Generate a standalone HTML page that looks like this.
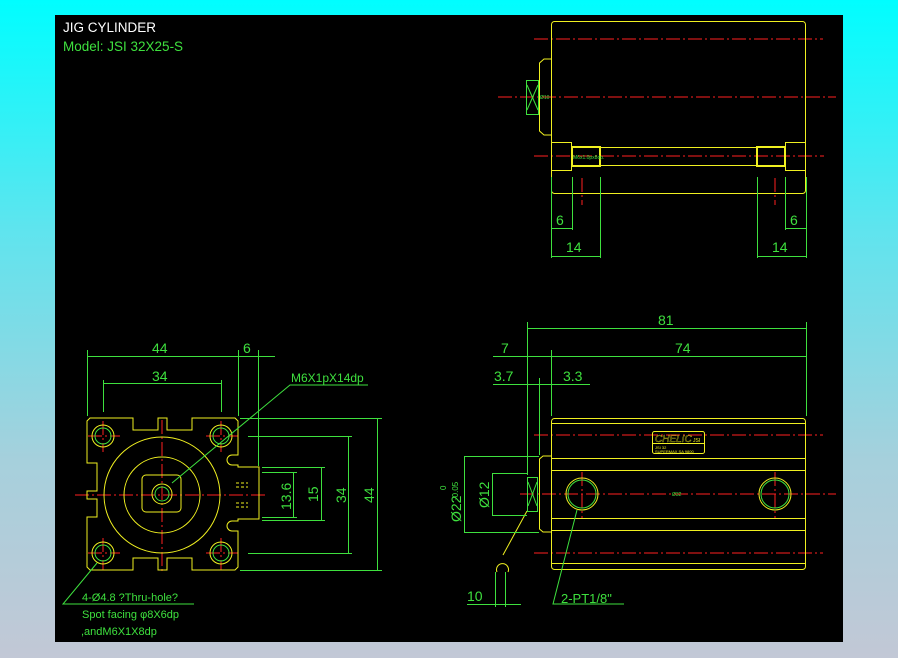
<!DOCTYPE html>
<html><head><meta charset="utf-8"><style>
html,body{margin:0;padding:0;}
body{width:898px;height:658px;overflow:hidden;background:linear-gradient(#00feff 0%,#5fe4ee 35%,#a6d0dc 70%,#c2c8d6 100%);position:relative;}
#p{position:absolute;left:55px;top:15px;width:788px;height:627px;background:#000;}
svg{position:absolute;left:0;top:0;}
text{font-family:"Liberation Sans",sans-serif;}
</style></head><body>
<div id="p"></div>
<svg width="898" height="658" viewBox="0 0 898 658">
<g fill="none" stroke-width="1">
<!-- title -->
<text x="63" y="32" fill="#fff" font-size="13.5" stroke="none">JIG CYLINDER</text>
<text x="63" y="51" fill="#3ee03e" font-size="13.5" stroke="none">Model: JSI 32X25-S</text>

<!-- TOP VIEW -->
<g stroke="#ff2020" stroke-dasharray="14,3,2,3">
<line x1="534" y1="39" x2="823" y2="39"/>
<line x1="498" y1="97" x2="836" y2="97"/>
<line x1="534" y1="156" x2="824" y2="156"/>
<line x1="582" y1="178" x2="582" y2="205"/>
<line x1="775" y1="178" x2="775" y2="205"/>
</g>
<g stroke="#f0f020">
<rect x="551.5" y="21.5" width="254" height="172" rx="3"/>
<path d="M551 59 H544 L539.5 63 V131 L544 135 H551"/>
<rect x="551.5" y="142.5" width="20" height="28"/>
<rect x="785.5" y="142.5" width="20" height="28"/>
<rect x="572" y="147" width="28" height="19" stroke-width="2"/>
<line x1="600" y1="147.5" x2="757" y2="147.5"/>
<line x1="600" y1="165.5" x2="757" y2="165.5"/>
<rect x="757" y="147" width="28" height="19" stroke-width="2"/>
</g>
<g stroke="#3ee03e">
<rect x="526.5" y="80.5" width="12" height="34"/>
<path d="M527 85 L538 110 M538 85 L527 110"/>
<line x1="551.5" y1="177" x2="551.5" y2="258"/>
<line x1="572.5" y1="177" x2="572.5" y2="230"/>
<line x1="600.5" y1="177" x2="600.5" y2="258"/>
<line x1="757.5" y1="177" x2="757.5" y2="258"/>
<line x1="785.5" y1="177" x2="785.5" y2="230"/>
<line x1="806.5" y1="177" x2="806.5" y2="258"/>
<line x1="551" y1="228.5" x2="572" y2="228.5"/>
<line x1="785" y1="228.5" x2="806" y2="228.5"/>
<line x1="551" y1="256.5" x2="600" y2="256.5"/>
<line x1="757" y1="256.5" x2="806" y2="256.5"/>
</g>
<g fill="#3ee03e" stroke="none" font-size="14">
<text x="556" y="225">6</text><text x="790" y="225">6</text>
<text x="566" y="252">14</text><text x="772" y="252">14</text>
<text x="573" y="159" font-size="5">M6x1.0px8dp.</text>
<text x="540" y="99" font-size="5">Ø10</text>
</g>

<!-- FRONT VIEW -->
<g stroke="#ff2020" stroke-dasharray="14,3,2,3">
<line x1="75" y1="495" x2="265" y2="495"/>
<line x1="162" y1="420" x2="162" y2="572"/>
<line x1="88" y1="436" x2="120" y2="436"/><line x1="103" y1="421" x2="103" y2="452"/>
<line x1="206" y1="436" x2="238" y2="436"/><line x1="221" y1="421" x2="221" y2="452"/>
<line x1="88" y1="553" x2="120" y2="553"/><line x1="103" y1="538" x2="103" y2="570"/>
<line x1="206" y1="553" x2="238" y2="553"/><line x1="221" y1="538" x2="221" y2="570"/>
</g>
<g stroke="#f0f020">
<path d="M90 418 H133 V430 H158 V418 H167 V430 H192 V418 H235 L238 421 V455 H232 A5 5 0 0 0 232 465 H238 V467 H259 V519 H238 V521 H232 A5 5 0 0 0 232 531 H238 V567 L235 570 H192 V558 H167 V570 H158 V558 H133 V570 H90 L87 567 V517 H97 V499 H87 V491 H97 V463 H87 V421 Z"/>
<circle cx="162" cy="495" r="58"/>
<circle cx="162" cy="495" r="38"/>
<rect x="142" y="475" width="39" height="37" rx="4"/>
<circle cx="162" cy="494" r="10"/>
<circle cx="103" cy="436" r="11"/><circle cx="221" cy="436" r="11"/>
<circle cx="103" cy="553" r="11"/><circle cx="221" cy="553" r="11"/>
<path d="M236 483 h12 M236 487 h12 M236 503 h12 M236 507 h12" stroke-dasharray="3,2"/>
</g>
<g stroke="#3ee03e">
<circle cx="162" cy="494" r="7"/>
<circle cx="103" cy="436" r="8"/><circle cx="221" cy="436" r="8"/>
<circle cx="103" cy="553" r="8"/><circle cx="221" cy="553" r="8"/>
<line x1="87.5" y1="350" x2="87.5" y2="416"/>
<line x1="238.5" y1="350" x2="238.5" y2="416"/>
<line x1="258.5" y1="350" x2="258.5" y2="466"/>
<line x1="103.5" y1="380" x2="103.5" y2="412"/>
<line x1="221.5" y1="380" x2="221.5" y2="412"/>
<line x1="87" y1="356.5" x2="275" y2="356.5"/>
<line x1="103" y1="383.5" x2="221" y2="383.5"/>
<line x1="240" y1="418.5" x2="382" y2="418.5"/>
<line x1="248" y1="436.5" x2="352" y2="436.5"/>
<line x1="262" y1="467.5" x2="325" y2="467.5"/>
<line x1="262" y1="472.5" x2="297" y2="472.5"/>
<line x1="262" y1="517.5" x2="297" y2="517.5"/>
<line x1="262" y1="520.5" x2="325" y2="520.5"/>
<line x1="248" y1="553.5" x2="352" y2="553.5"/>
<line x1="240" y1="570.5" x2="382" y2="570.5"/>
<line x1="293.5" y1="472" x2="293.5" y2="517"/>
<line x1="321.5" y1="467" x2="321.5" y2="520"/>
<line x1="348.5" y1="436" x2="348.5" y2="553"/>
<line x1="377.5" y1="418" x2="377.5" y2="570"/>
<path d="M172 483 L290 385 H368"/>
<path d="M97 563 L63 604 H194"/>
</g>
<g fill="#3ee03e" stroke="none" font-size="14">
<text x="152" y="353">44</text>
<text x="243" y="353">6</text>
<text x="152" y="381">34</text>
<text x="291" y="382" font-size="12">M6X1pX14dp</text>
<text transform="translate(291,510) rotate(-90)">13.6</text>
<text transform="translate(318,502) rotate(-90)">15</text>
<text transform="translate(346,503) rotate(-90)">34</text>
<text transform="translate(374,503) rotate(-90)">44</text>
<text x="82" y="601" font-size="11">4-Ø4.8 ?Thru-hole?</text>
<text x="82" y="618" font-size="11">Spot facing φ8X6dp</text>
<text x="81" y="635" font-size="11">,andM6X1X8dp</text>
</g>

<!-- SIDE VIEW -->
<g stroke="#ff2020" stroke-dasharray="14,3,2,3">
<line x1="534" y1="435" x2="823" y2="435"/>
<line x1="520" y1="494" x2="836" y2="494"/>
<line x1="534" y1="553" x2="823" y2="553"/>
<line x1="582" y1="472" x2="582" y2="519"/>
<line x1="775" y1="472" x2="775" y2="519"/>
</g>
<g stroke="#f0f020">
<rect x="551.5" y="418.5" width="254" height="151" rx="3"/>
<line x1="551" y1="423.5" x2="806" y2="423.5"/>
<line x1="551" y1="458.5" x2="806" y2="458.5"/>
<line x1="551" y1="470.5" x2="806" y2="470.5"/>
<line x1="551" y1="518.5" x2="806" y2="518.5"/>
<line x1="551" y1="530.5" x2="806" y2="530.5"/>
<line x1="551" y1="563.5" x2="806" y2="563.5"/>
<path d="M551 456 H543 L539.5 459 V529 L543 532 H551"/>
<circle cx="582" cy="494" r="16"/><circle cx="775" cy="494" r="16"/>
<rect x="652.5" y="431.5" width="52" height="22" rx="2"/>
<line x1="652" y1="443.5" x2="704" y2="443.5"/>
<path d="M527 511 L503 555"/>
<path d="M497 572 A6 6 0 1 1 508 572"/>
</g>
<g stroke="#3ee03e">
<circle cx="582" cy="494" r="14"/><circle cx="775" cy="494" r="14"/>
<rect x="527.5" y="477.5" width="10" height="34"/>
<path d="M528 482 L537 506 M537 482 L528 506"/>
<line x1="527.5" y1="322" x2="527.5" y2="475"/>
<line x1="806.5" y1="322" x2="806.5" y2="416"/>
<line x1="551.5" y1="350" x2="551.5" y2="416"/>
<line x1="539.5" y1="378" x2="539.5" y2="455"/>
<line x1="527" y1="328.5" x2="806" y2="328.5"/>
<line x1="493" y1="356.5" x2="806" y2="356.5"/>
<line x1="493" y1="384.5" x2="590" y2="384.5"/>
<line x1="464" y1="456.5" x2="539" y2="456.5"/>
<line x1="464" y1="532.5" x2="539" y2="532.5"/>
<line x1="464.5" y1="456" x2="464.5" y2="532"/>
<line x1="492" y1="473.5" x2="527" y2="473.5"/>
<line x1="492" y1="515.5" x2="527" y2="515.5"/>
<line x1="492.5" y1="473" x2="492.5" y2="515"/>
<line x1="495.5" y1="572" x2="495.5" y2="607"/>
<line x1="505.5" y1="572" x2="505.5" y2="607"/>
<line x1="467" y1="604.5" x2="521" y2="604.5"/>
<path d="M577 510 L553 604 H624"/>
</g>
<g fill="#3ee03e" stroke="none" font-size="14">
<text x="658" y="325">81</text>
<text x="501" y="353">7</text>
<text x="675" y="353">74</text>
<text x="494" y="381">3.7</text>
<text x="563" y="381">3.3</text>
<text transform="translate(461,522) rotate(-90)">Ø22</text>
<text transform="translate(458,500) rotate(-90)" font-size="8">-0.05</text>
<text transform="translate(446,490) rotate(-90)" font-size="8">0</text>
<text transform="translate(489,508) rotate(-90)">Ø12</text>
<text x="467" y="601">10</text>
<text x="561" y="603" font-size="13">2-PT1/8"</text>
<text x="672" y="496" font-size="5">Ø32</text>
</g>
<g fill="#f0f020" stroke="none">
<text x="655" y="442" font-size="10" font-style="italic" stroke="#f0f020" stroke-width="0.3" fill="none">CHELIC</text>
<text x="693" y="442" font-size="5">JSI</text>
<text x="655" y="449" font-size="4">JSI 32</text>
<text x="655" y="453" font-size="4">SUPERMAX SA 9800</text>
</g>
</g>
</svg>
</body></html>
